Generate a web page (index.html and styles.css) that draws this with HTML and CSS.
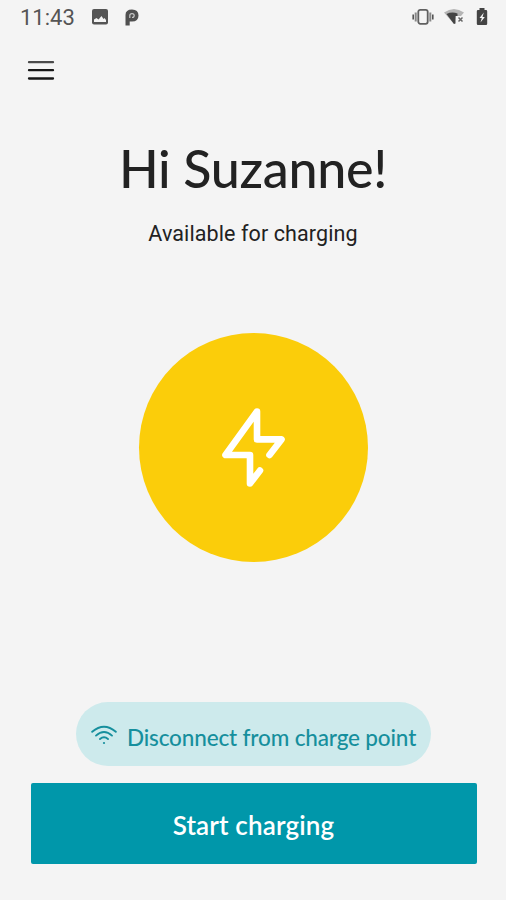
FILE: index.html
```html
<!DOCTYPE html>
<html lang="en">
<head>
<meta charset="utf-8">
<title>Charging</title>
<link rel="stylesheet" href="styles.css">
</head>
<body>
<main class="screen">
  <header class="status">
    <span class="time">11:43</span>
    <svg class="picture" width="16" height="16" viewBox="0 0 16 16"><rect width="16" height="15.5" rx="2" fill="#555"/><path d="M2 13V10.5L4.5 9l2 1.5L9.5 7l2 3 1-1 1.500 2v2z" fill="#f4f4f4"/></svg>
    <svg class="parking" width="14" height="17" viewBox="0 0 14 17"><path d="M.5 16.500V6Q.5.500 7 .500Q13.500.500 13.500 6.500T7 12.500H4.700V16.500z" fill="#505050"/><path d="M4.800 9V6.500Q4.800 4.600 7 4.600T9.200 6.500 7 8.500" fill="none" stroke="#c8c8c8" stroke-width="1.200"/></svg>
    <svg class="vibrate" width="22" height="18" viewBox="0 0 22 18"><rect x="6.300" y="1.800" width="9.400" height="14" rx="2" fill="none" stroke="#606060" stroke-width="1.800"/><path d="M3.700 4.500v9M18.300 4.500v9" stroke="#888" stroke-width="2"/><path d="M1.200 6.500v5M20.800 6.500v5" stroke="#555" stroke-width="1.600"/></svg>
    <svg class="signal" width="21" height="18" viewBox="0 0 21 18"><path d="M0 4.500Q10-2.500 20 4.500L17 8H12L10 16z" fill="#b5b5b5"/><path d="M2.500 6Q8 3.500 13.500 5.500V8H11.500V15.500L10 16z" fill="#444"/><path d="M14.500 9.500l4 4m0-4l-4 4" stroke="#666" stroke-width="1.500"/></svg>
    <svg class="battery" width="12" height="18" viewBox="0 0 12 18"><path d="M3.500 0h5v2H10q1.200 0 1.200 1.200v12.600Q11.200 17 10 17H2Q.8 17 .8 15.800V3.200Q.8 2 2 2h1.500z" fill="#444"/><path d="M7.800 4.500L3.500 10h2.300L4.500 14.500 8.800 9H6.500z" fill="#f4f4f4"/></svg>
  </header>
  <nav class="nav">
    <svg width="28" height="22" viewBox="0 0 28 22"><g stroke-linecap="round" stroke-width="2.300"><path d="M2 3.200h24" stroke="#4b4b4b"/><path d="M2 11.200h24" stroke="#171717"/><path d="M2 19.500h24" stroke="#171717"/></g></svg>
  </nav>
  <h1 class="greeting">Hi Suzanne!</h1>
  <p class="state">Available for charging</p>
  <div class="charge">
    <svg width="90" height="95" viewBox="0 0 90 95"><path d="M59.500 55L71.500 39.400H47V11.500L15.500 55H40V83.500L50 70.500" class="bolt"/></svg>
  </div>
  <button class="disconnect">
    <svg class="wifi" width="26" height="20" viewBox="0 0 26 20"><g fill="none" stroke="#168f9d" stroke-width="1.900" stroke-linecap="round"><path d="M1.200 6.800Q13-3.500 24.800 6.800"/><path d="M5 10.600Q13 3.500 21 10.600"/><path d="M9 14Q13 10.500 17 14"/></g><circle cx="13" cy="18" r="1.100" fill="#168f9d"/></svg>
    <span>Disconnect from charge point</span>
  </button>
  <button class="start"><span>Start charging</span></button>
</main>
</body>
</html>
```
FILE: styles.css
```css
* { box-sizing: border-box; }
body { margin: 0; background: #f4f4f4; }
.screen {
  width: 506px;
  height: 900px;
  display: flex;
  flex-direction: column;
  align-items: center;
  color: #222;
  font-family: Lato, "Liberation Sans", sans-serif;
}
svg { display: block; flex: none; }
.status {
  width: 100%;
  height: 36px;
  display: flex;
  align-items: center;
  padding: 0 18px 2px 20px;
}
.time {
  width: 54px;
  margin-right: 18px;
  color: #555;
  font: 22px/28px Roboto, sans-serif;
  padding-top: 1px;
  white-space: nowrap;
}
.parking { margin-left: 17px; }
.vibrate { margin-left: auto; }
.signal { margin-left: 10px; }
.battery { margin-left: 11px; }
.nav { width: 100%; height: 68px; padding: 23px 27px 0; }
.greeting {
  margin: 32px 0 0;
  height: 64px;
  font-size: 52px;
  line-height: 64px;
  font-weight: 500;
  letter-spacing: -0.3px;
  white-space: nowrap;
}
.state {
  margin: 20px 0 0;
  height: 28px;
  font: 21.500px/28px Roboto, sans-serif;
  letter-spacing: 0.1px;
  white-space: nowrap;
}
.charge {
  width: 229px;
  height: 229px;
  margin: 85px 0 0 1px;
  padding: 67px 0 0 71px;
  border-radius: 50%;
  background: #fbcd0a;
}
.bolt {
  fill: none;
  stroke: #fff;
  stroke-width: 6.600;
  stroke-linecap: round;
  stroke-linejoin: round;
}
button { border: 0; font-family: inherit; white-space: nowrap; }
.disconnect {
  width: 355px;
  height: 64px;
  margin: 140px 0 0 1px;
  padding: 6px 0 0 15px;
  display: flex;
  align-items: center;
  gap: 10px;
  border-radius: 32px;
  background: #cdeaec;
  color: #168f9d;
  font-size: 22.500px;
  font-weight: 500;
  letter-spacing: -0.150px;
}
.wifi { margin-bottom: 5px; }
.start {
  width: 446px;
  height: 81px;
  margin: 17px 0 0 1px;
  padding: 3px 0 0;
  border-radius: 2px;
  background: #0097aa;
  color: #fff;
  font-size: 26px;
  font-weight: 600;
  letter-spacing: 0.150px;
}
```
